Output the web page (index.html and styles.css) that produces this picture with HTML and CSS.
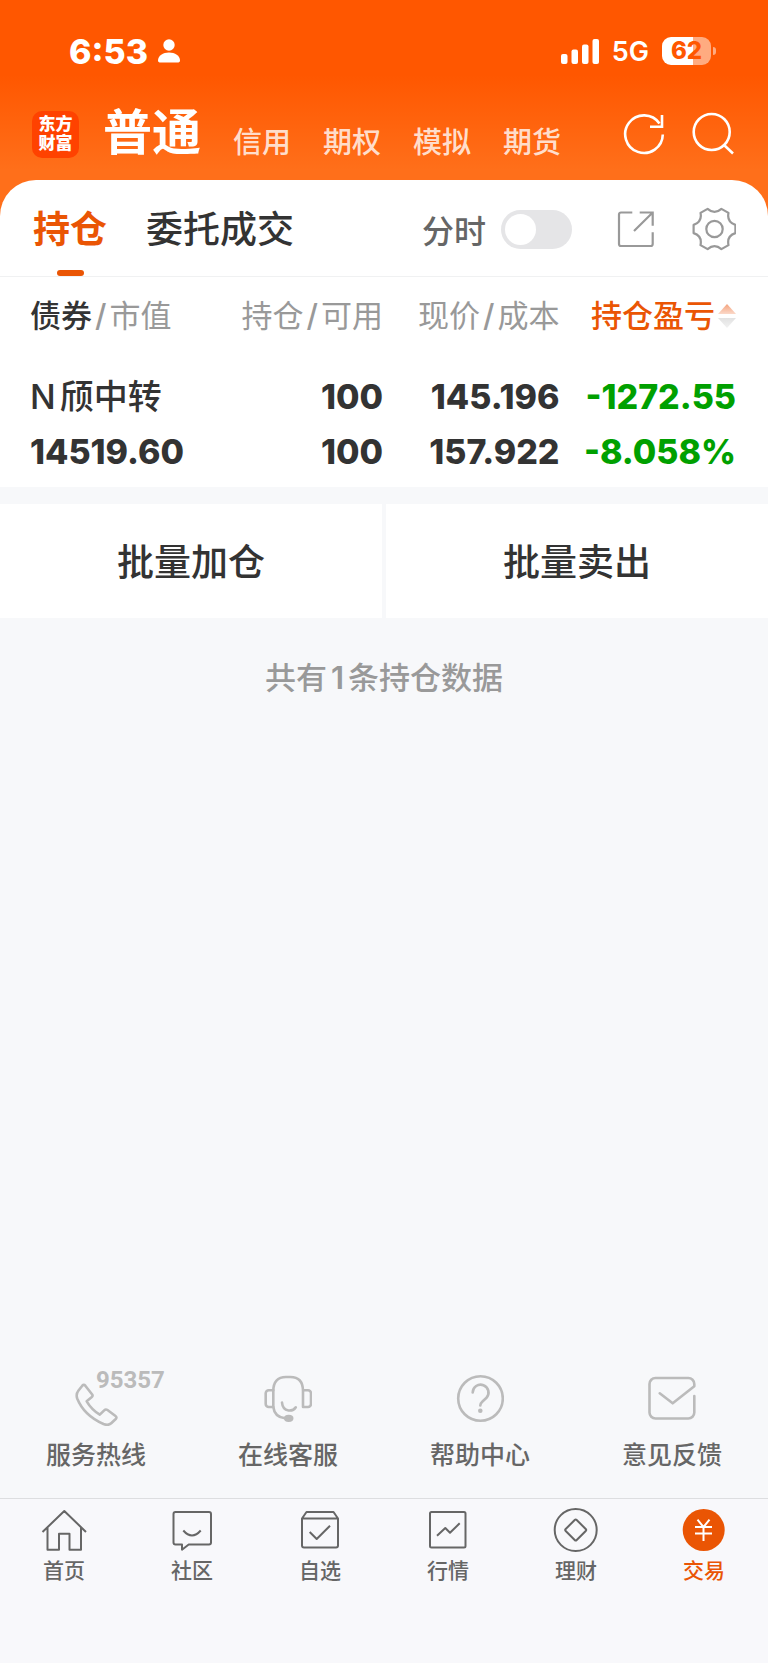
FILE: index.html
```html
<!DOCTYPE html>
<html lang="zh-CN">

<head>
    <meta charset="UTF-8">
    <meta name="viewport" content="width=device-width, initial-scale=1.0">
    <title>持仓</title>
    <link rel="stylesheet" href="styles.css">
</head>

<body>
    <header class="top">
        <div class="status">
            <div class="status-left">
                <span class="clock">6:53</span>
                <svg width="22" height="24" viewBox="0 0 22 24" fill="#fff">
                    <circle cx="11" cy="6" r="5.7" />
                    <path d="M0 21.500C0 16.500 5 13.500 11 13.500s11 3 11 8c0 1.500-1 2-2.500 2h-17C1 23.500 0 23 0 21.500z" />
                </svg>
            </div>
            <div class="status-right">
                <svg width="38" height="25" viewBox="0 0 38 25" fill="#fff">
                    <rect x="0" y="15" width="6.500" height="10" rx="2" />
                    <rect x="10.500" y="10.500" width="6.500" height="14.500" rx="2" />
                    <rect x="21" y="5.500" width="6.500" height="19.500" rx="2" />
                    <rect x="31.500" y="0" width="6.500" height="25" rx="2" />
                </svg>
                <span class="network">5G</span>
                <span class="battery">62</span>
            </div>
        </div>

        <div class="bar">
            <div class="logo">东方<br>财富</div>
            <nav class="accounts">
                <a class="current" href="#">普通</a>
                <a href="#">信用</a>
                <a href="#">期权</a>
                <a href="#">模拟</a>
                <a href="#">期货</a>
            </nav>
            <div class="bar-actions">
                <button type="button" aria-label="刷新">
                    <svg width="44" height="44" viewBox="0 0 44 44" fill="none" stroke="#fff" stroke-width="2.600">
                        <path d="M40.800 22.500A18.800 18.800 0 1 1 37.500 11.500" />
                        <path d="M40 3V14.700H28" />
                    </svg>
                </button>
                <button type="button" aria-label="搜索">
                    <svg width="44" height="44" viewBox="0 0 44 44" fill="none" stroke="#fff" stroke-width="2.600">
                        <circle cx="19.700" cy="20" r="18" />
                        <path d="M31.500 32.500L41 41.500" />
                    </svg>
                </button>
            </div>
        </div>
    </header>

    <main class="panel">
        <div class="tabs">
            <a class="tab active" href="#">持仓</a>
            <a class="tab" href="#">委托成交</a>
            <div class="tools">
                <label for="minute">分时</label>
                <input class="switch" type="checkbox" id="minute">
                <button class="share" type="button" aria-label="分享">
                    <svg width="38" height="38" viewBox="0 0 38 38" fill="none" stroke="#999" stroke-width="2.200">
                        <path d="M15.300 2.500H4a2 2 0 0 0-2 2V34a2 2 0 0 0 2 2H33.700a2 2 0 0 0 2-2V22.300" />
                        <path d="M22.700 2.500H35.700V15.700M35.700 2.500L17 21" />
                    </svg>
                </button>
                <button class="gear" type="button" aria-label="设置">
                    <svg width="44" height="44" viewBox="-22.500 -22 44 44" fill="none" stroke="#999" stroke-width="2.200" stroke-linejoin="round">
                        <path d="M20.900 4.100Q12.100 7 14 16.100L6.900 20.100Q0 14-6.900 20.100L-14 16.100Q-12.100 7-20.900 4.100V-4.100Q-12.100-7-14-16.100L-6.900-20.100Q0-14 6.900-20.100L14-16.100Q12.100-7 20.900-4.100Z" />
                        <circle r="8.200" />
                    </svg>
                </button>
            </div>
        </div>

        <table class="holdings">
            <thead>
                <tr>
                    <th><b>债券</b><i>/</i>市值</th>
                    <th>持仓<i>/</i>可用</th>
                    <th>现价<i>/</i>成本</th>
                    <th class="sorted">
                        <button type="button">持仓盈亏<svg width="18" height="26" viewBox="0 0 18 26">
                            <defs>
                                <linearGradient id="up" x2="0" y2="1">
                                    <stop offset="0" stop-color="#f4a27c" />
                                    <stop offset="1" stop-color="#fbd9c9" />
                                </linearGradient>
                                <linearGradient id="down" x2="0" y2="1">
                                    <stop offset="0" stop-color="#e2e2e2" />
                                    <stop offset="1" stop-color="#f2f2f2" />
                                </linearGradient>
                            </defs>
                            <path d="M9 1L18 11H0z" fill="url(#up)" />
                            <path d="M9 25L18 15H0z" fill="url(#down)" />
                        </svg></button>
                    </th>
                </tr>
            </thead>
            <tbody>
                <tr>
                    <td><span class="name"><span class="prefix">N</span>颀中转</span><br>14519.60</td>
                    <td>100<br>100</td>
                    <td>145.196<br>157.922</td>
                    <td class="loss">-1272.55<br>-8.058%</td>
                </tr>
            </tbody>
        </table>
    </main>

    <div class="batch">
        <button type="button">批量加仓</button>
        <button type="button">批量卖出</button>
    </div>

    <p class="total">共有<span class="count">1</span>条持仓数据</p>

    <div class="services">
        <a href="#">
            <span class="service-icon">
                <svg width="48" height="52" viewBox="0 0 48 52">
                    <path d="M13.300 11.700L20 20.200q1.200 1.500-.2 2.800L14.700 27.300Q19.500 35.500 27.800 40.700L32.200 36.300q1.500-1.500 3.300-.3L43.500 42q1.800 1.400.2 3L39.500 49Q36.500 52 31.500 50Q12 41.500 5.200 24.500Q3.700 20 6.500 16.500L10.300 11.700q1.500-1.700 3 0z" />
                </svg>
                <span class="hotline">95357</span>
            </span>
            服务热线
        </a>
        <a href="#">
            <span class="service-icon">
                <svg width="48" height="52" viewBox="0 0 48 52">
                    <path d="M9.300 33V17Q9.300 3 22 3H26.300Q39 3 39 17V33H44a3 3 0 0 0 3-3V19.300a3 3 0 0 0-3-3H39" />
                    <path d="M9.300 16.300H4.700a3 3 0 0 0-3 3V30a3 3 0 0 0 3 3H9.300Q10.500 43 21 44.300" />
                    <path d="M18 28.500Q18.500 35.500 24.500 36.500Q29.500 37 31.800 33.300" />
                    <ellipse class="solid" cx="24.700" cy="44.300" rx="3.500" ry="2.300" />
                </svg>
            </span>
            在线客服
        </a>
        <a href="#">
            <span class="service-icon">
                <svg width="48" height="52" viewBox="0 0 48 52">
                    <circle cx="24.500" cy="24.500" r="22.300" />
                    <path d="M16.700 18.500a7.900 7.900 0 1 1 13.800 5.300L26.500 27.500Q24.300 29.500 24.300 31.500" />
                    <circle class="solid" cx="24.300" cy="36.800" r="1" />
                </svg>
            </span>
            帮助中心
        </a>
        <a href="#">
            <span class="service-icon">
                <svg width="48" height="52" viewBox="0 0 48 52">
                    <path d="M46.300 22V38.500a6 6 0 0 1-6 6H7.500a6 6 0 0 1-6-6V10a6 6 0 0 1 6-6H40.300a6 6 0 0 1 6 6V12.300L24.700 29.300 11.700 19.300" />
                </svg>
            </span>
            意见反馈
        </a>
    </div>

    <nav class="tabbar">
        <a href="#">
            <svg width="46" height="46" viewBox="0 0 46 46">
                <path d="M1.500 25L23.300 4 45 25M6.500 20.500V42.700H18V26.700H28.500V42.700H40V20.500" />
            </svg>
            首页
        </a>
        <a href="#">
            <svg width="46" height="46" viewBox="0 0 46 46">
                <path d="M6.500 5H40a2 2 0 0 1 2 2V35.500a2 2 0 0 1-2 2H19.700L13 42.700V37.500H6.500a2 2 0 0 1-2-2V7a2 2 0 0 1 2-2z" />
                <path d="M14.300 23.500Q23 33.500 31.700 23.500" />
            </svg>
            社区
        </a>
        <a href="#">
            <svg width="46" height="46" viewBox="0 0 46 46">
                <path d="M5 11.500H41V38.500a2 2 0 0 1-2 2H7a2 2 0 0 1-2-2zL9.500 5H36.500L41 11.500" />
                <path d="M12.700 25L19.700 32 33 18.700" />
            </svg>
            自选
        </a>
        <a href="#">
            <svg width="46" height="46" viewBox="0 0 46 46">
                <rect x="5" y="5" width="35.500" height="35.500" rx="1.500" />
                <path d="M12 28.700L20.300 21 25 25.700 34.700 16.300" />
            </svg>
            行情
        </a>
        <a href="#">
            <svg width="46" height="46" viewBox="0 0 46 46">
                <circle cx="22.700" cy="23" r="21" />
                <path d="M21.700 13L12.700 22q-1 1 0 2l9 9q1 1 2 0l9-9q1-1 0-2l-9-9q-1-1-2 0z" />
            </svg>
            理财
        </a>
        <a class="active" href="#">
            <svg width="46" height="46" viewBox="0 0 46 46">
                <circle class="disc" cx="22.700" cy="23" r="21" />
                <path class="yen" d="M16.500 12.700L22.500 20 28.500 12.700M14 20H31M14 26.500H31M22.500 20V34" />
            </svg>
            交易
        </a>
    </nav>
</body>

</html>
```
FILE: styles.css
```css
:root {
    --orange: #ea5504;
    --dark: #333;
    --grey: #999;
    --bg: #f7f8fa;
}

* {
    box-sizing: border-box;
}

body {
    margin: 0;
    min-height: 100vh;
    display: flex;
    flex-direction: column;
    background: var(--bg);
    color: var(--dark);
    font-family: Inter, "Noto Sans CJK SC", sans-serif;
    font-weight: 500;
}

a {
    color: inherit;
    text-decoration: none;
}

button {
    padding: 0;
    border: 0;
    background: none;
    color: inherit;
    font: inherit;
    cursor: pointer;
}

svg {
    display: block;
}

/* header */
.top {
    height: 220px;
    padding: 31px 32px 0;
    background: linear-gradient(#ff5700 75px, #ff6f1a 170px);
    color: #fff;
}

.status {
    display: flex;
    justify-content: space-between;
    align-items: center;
    height: 40px;
    padding: 0 20px 0 37px;
}

.status-left,
.status-right {
    display: flex;
    align-items: center;
}

.status-left {
    gap: 10px;
}

.status-right {
    gap: 13px;
}

.clock {
    font-size: 34px;
    font-weight: 800;
}

.network {
    font-size: 27px;
    font-weight: 600;
}

.battery {
    position: relative;
    width: 49px;
    height: 28px;
    margin-right: 5px;
    border-radius: 9px;
    background: linear-gradient(90deg, #fff 63%, #ffab80 63%);
    color: #ff5700;
    font-size: 24px;
    font-weight: 800;
    line-height: 28px;
    text-align: center;
}

.battery::after {
    content: "";
    position: absolute;
    left: 51px;
    top: 10px;
    width: 3px;
    height: 8px;
    border-radius: 0 4px 4px 0;
    background: #ffab80;
}

.bar {
    display: flex;
    align-items: center;
    height: 64px;
    margin-top: 31px;
}

.logo {
    width: 47px;
    height: 47px;
    padding-top: 4px;
    border-radius: 10px;
    background: #ff4200;
    font-size: 17px;
    font-weight: 900;
    line-height: 19px;
    text-align: center;
}

.accounts {
    display: flex;
    align-items: flex-end;
    gap: 32px;
    margin-left: 24px;
    padding-bottom: 3px;
    font-size: 29px;
    line-height: 1;
}

.accounts a {
    color: rgba(255, 255, 255, 0.8);
}

.accounts .current {
    color: #fff;
    font-size: 49px;
    font-weight: 700;
}

.bar-actions {
    display: flex;
    gap: 26px;
    margin-left: auto;
}

/* holdings */
.panel {
    margin-top: -40px;
    border-radius: 36px 36px 0 0;
    background: #fff;
}

.tabs {
    display: flex;
    align-items: center;
    height: 97px;
    padding: 0 32px 0 33px;
    border-bottom: 1px solid #f0f1f2;
    font-size: 37px;
}

.tab {
    position: relative;
    height: 96px;
    margin-right: 39px;
    line-height: 100px;
}

.tab.active {
    color: var(--orange);
    font-weight: 700;
}

.tab.active::after {
    content: "";
    position: absolute;
    left: 24px;
    bottom: 0;
    width: 27px;
    height: 6px;
    border-radius: 3px;
    background: var(--orange);
}

.tools {
    display: flex;
    align-items: center;
    margin-left: auto;
    padding-top: 2px;
    color: #666;
    font-size: 32px;
}

.switch {
    appearance: none;
    width: 71px;
    height: 39px;
    margin: 0 45px 0 15px;
    padding: 4px;
    border-radius: 20px;
    background: #e5e5e7;
}

.switch::before {
    content: "";
    display: block;
    width: 31px;
    height: 31px;
    border-radius: 50%;
    background: #fff;
}

.switch:checked {
    background: var(--orange);
}

.switch:checked::before {
    margin-left: auto;
}

.gear {
    margin-left: 37px;
}

.holdings {
    width: 100%;
    padding: 0 32px 8px 30px;
    border-spacing: 0;
    table-layout: fixed;
}

.holdings th,
.holdings td {
    padding: 0;
    text-align: right;
    white-space: nowrap;
}

.holdings th:first-child,
.holdings td:first-child {
    text-align: left;
}

.holdings th {
    height: 80px;
    padding-bottom: 8px;
    color: var(--grey);
    font-size: 31px;
    font-weight: 400;
}

.holdings th b {
    color: var(--dark);
    font-weight: 500;
}

.holdings th i {
    margin: 0 3px;
    font-style: normal;
    font-weight: 500;
}

.holdings .sorted button {
    display: inline-flex;
    align-items: center;
    gap: 3px;
    color: var(--orange);
    font-weight: 500;
}

.sorted svg {
    margin-top: 6px;
}

.holdings td {
    padding-top: 12px;
    font-size: 34px;
    font-weight: 800;
    line-height: 55px;
}

.holdings .name {
    font-weight: 500;
}

.prefix {
    margin-right: 4px;
}

.loss {
    color: #00a000;
}

.batch {
    display: flex;
    gap: 4px;
    margin-top: 17px;
}

.batch button {
    flex: 1;
    height: 114px;
    padding-bottom: 3px;
    background: #fff;
    font-size: 37px;
}

.total {
    margin: 36px 0;
    color: var(--grey);
    font-size: 31px;
    line-height: 48px;
    text-align: center;
}

.count {
    margin: 0 4px;
    font-weight: 600;
}

/* services */
.services {
    display: flex;
    margin-top: auto;
    padding-bottom: 25px;
    color: #666;
    font-size: 25px;
    line-height: 36px;
}

.services a {
    flex: 1;
    display: flex;
    flex-direction: column;
    align-items: center;
    gap: 11px;
}

.service-icon {
    position: relative;
}

.service-icon svg {
    fill: none;
    stroke: #bbb;
    stroke-width: 2.6;
    stroke-linecap: round;
    stroke-linejoin: round;
}

.service-icon .solid {
    fill: #bbb;
}

.hotline {
    position: absolute;
    left: 24px;
    top: -12px;
    color: #bbb;
    font-family: Roboto, sans-serif;
    font-size: 24px;
    font-weight: 700;
}

/* bottom navigation */
.tabbar {
    display: flex;
    padding: 8px 0 78px;
    border-top: 1px solid #dddee0;
    background: #f8f8fb;
    color: #666;
    font-size: 21px;
    line-height: 28px;
}

.tabbar a {
    flex: 1;
    display: flex;
    flex-direction: column;
    align-items: center;
    gap: 4px;
}

.tabbar svg {
    fill: none;
    stroke: #666;
    stroke-width: 2;
    stroke-linejoin: round;
}

.tabbar .active {
    color: var(--orange);
}

.tabbar .disc {
    fill: var(--orange);
    stroke: none;
}

.tabbar .yen {
    stroke: #fff;
}
```
